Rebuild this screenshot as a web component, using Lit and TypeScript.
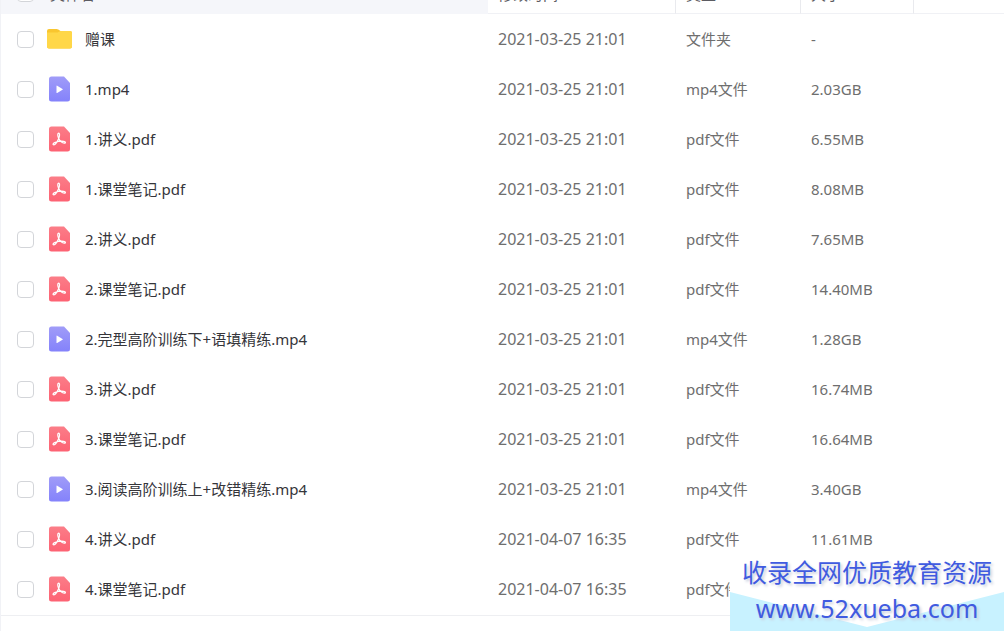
import { LitElement, html, css, svg } from "lit";
import { customElement } from "lit/decorators.js";

type Kind = "folder" | "mp4" | "pdf";
interface Entry { name: string; kind: Kind; date: string; size: string; }

const D1 = "2021-03-25 21:01";
const D2 = "2021-04-07 16:35";
const FILES: Entry[] = [
  { name: "赠课", kind: "folder", date: D1, size: "-" },
  { name: "1.mp4", kind: "mp4", date: D1, size: "2.03GB" },
  { name: "1.讲义.pdf", kind: "pdf", date: D1, size: "6.55MB" },
  { name: "1.课堂笔记.pdf", kind: "pdf", date: D1, size: "8.08MB" },
  { name: "2.讲义.pdf", kind: "pdf", date: D1, size: "7.65MB" },
  { name: "2.课堂笔记.pdf", kind: "pdf", date: D1, size: "14.40MB" },
  { name: "2.完型高阶训练下+语填精练.mp4", kind: "mp4", date: D1, size: "1.28GB" },
  { name: "3.讲义.pdf", kind: "pdf", date: D1, size: "16.74MB" },
  { name: "3.课堂笔记.pdf", kind: "pdf", date: D1, size: "16.64MB" },
  { name: "3.阅读高阶训练上+改错精练.mp4", kind: "mp4", date: D1, size: "3.40GB" },
  { name: "4.讲义.pdf", kind: "pdf", date: D2, size: "11.61MB" },
  { name: "4.课堂笔记.pdf", kind: "pdf", date: D2, size: "" },
];
const TYPES: Record<Kind, string> = { folder: "文件夹", mp4: "mp4文件", pdf: "pdf文件" };

const SHEET = "M5 1.5H18L24 8V24a2.5 2.5 0 0 1-2.5 2.5H5.5A2.5 2.5 0 0 1 3 24V4A2.5 2.5 0 0 1 5.5 1.5Z";

const ICONS = {
  folder: svg`
    <path d="M1 6a2 2 0 0 1 2-2h7.5q1 0 1.8.6L14.5 6H24a2 2 0 0 1 2 2v13.500a2 2 0 0 1-2 2H3a2 2 0 0 1-2-2Z" fill="#f9c62f"/>
    <path d="M1 7.500h9.500q1.200 0 2-.5L14.500 6H24a2 2 0 0 1 2 2v13.500a2 2 0 0 1-2 2H3a2 2 0 0 1-2-2Z" fill="#ffd748"/>`,
  mp4: svg`
    <defs><linearGradient id="violet" x1="0" y1="0" x2="0" y2="1">
      <stop offset="0" stop-color="#a09cf8"/><stop offset="1" stop-color="#8482fb"/></linearGradient></defs>
    <path d=${SHEET} fill="url(#violet)"/>
    <path d="M10.5 11v6.500q0 .8.700.4l5.300-3.200q.600-.4 0-.8l-5.300-3.200q-.7-.4-.7.300Z" fill="#fff"/>`,
  pdf: svg`
    <defs><linearGradient id="coral" x1="0" y1="0" x2="0" y2="1">
      <stop offset="0" stop-color="#fb7d88"/><stop offset="1" stop-color="#fd6273"/></linearGradient></defs>
    <path d=${SHEET} fill="url(#coral)"/>
    <path d="M12.700 13.500C11.600 11.300 11.300 8.300 12.600 8.200C14 8.200 13.700 11.300 12.700 13.500C11.500 16.200 9.400 19.800 7.900 19.900C6.500 19.900 6.900 18.300 8.700 17.600C11.600 16.500 15.200 15.900 17.700 16.300C19.900 16.700 19.900 18.300 18.300 18.200C16.200 18 13.900 15.900 12.700 13.500Z" fill="none" stroke="#fff" stroke-width="1.200" stroke-linejoin="round"/>`,
};

@customElement("app-root")
export class AppRoot extends LitElement {
  static styles = css`
    :host {
      display: block;
      position: relative;
      min-height: 100vh;
      overflow: hidden;
      box-sizing: border-box;
      border-left: 1px solid #f1f2f6;
      background: #fff;
      color: #424e67;
      font-family: "Noto Sans", "Noto Sans CJK SC", sans-serif;
      font-size: 15px;
      line-height: 24px;
    }
    table {
      width: 100%;
      border-collapse: separate;
      border-spacing: 0;
      table-layout: fixed;
      margin-top: -26px;
      padding-bottom: 1px;
      border-bottom: 1px solid #eeeff2;
    }
    .c-name { width: 487px; }
    .c-date { width: 188px; }
    .c-type { width: 125px; }
    .c-size { width: 113px; }
    th, td { padding: 0 10px; text-align: left; font-weight: 400; white-space: nowrap; box-sizing: border-box; }
    th { height: 40px; color: #5c5c62; border-right: 1px solid #e9eaee; border-bottom: 1px solid #f0f1f5; }
    th:first-child { background: #f5f6fa; border-color: #f5f6fa; }
    th:last-child { border-right: 0; }
    td { height: 50px; color: #6e6e6e; }
    th:first-child, td:first-child { padding-left: 16px; }
    .cell { display: flex; align-items: center; }
    .date { font-size: 16px; }
    input {
      appearance: none;
      width: 17px;
      height: 17px;
      margin: 0;
      border: 1px solid #d3d5d9;
      border-radius: 4px;
      background: #fff;
      flex: none;
    }
    svg { width: 27px; height: 28px; margin: 0 12px; flex: none; }
    label { color: #35353a; }
    .head label { color: inherit; margin-left: 16px; }
    .banner {
      position: absolute;
      right: 0;
      bottom: 0;
      width: 274px;
      height: 77px;
      box-sizing: border-box;
      color: #405be0;
      text-align: center;
      text-decoration: none;
      font-size: 25px;
      line-height: 36px;
      text-shadow: 2px 2px 3px #c9cedd;
    }
    .banner svg { position: absolute; inset: 0; width: 100%; height: 100%; margin: 0; }
    .banner span { position: relative; display: block; white-space: nowrap; }
  `;

  render() {
    return html`
      <table>
        <colgroup>
          <col class="c-name"><col class="c-date"><col class="c-type"><col class="c-size"><col>
        </colgroup>
        <thead>
          <tr>
            <th><div class="cell head"><input type="checkbox" id="all"><label for="all">文件名</label></div></th>
            <th>修改时间</th><th>类型</th><th>大小</th><th></th>
          </tr>
        </thead>
        <tbody>
          ${FILES.map((f, i) => html`
            <tr>
              <td><div class="cell">
                <input type="checkbox" id="f${i}">
                <svg viewBox="0 0 27 28" aria-hidden="true">${ICONS[f.kind]}</svg>
                <label for="f${i}">${f.name}</label>
              </div></td>
              <td class="date">${f.date}</td>
              <td>${TYPES[f.kind]}</td>
              <td>${f.size}</td>
              <td></td>
            </tr>`)}
        </tbody>
      </table>
      <a class="banner" href="http://www.52xueba.com">
        <svg viewBox="0 0 274 77" preserveAspectRatio="none" aria-hidden="true">
          <path d="M0 0H274V77H0Z" fill="#fff"/>
          <path d="M0 38L137 73L274 38V77H0Z" fill="#c8f2ff"/>
        </svg>
        <span>收录全网优质教育资源</span>
        <span>www.52xueba.com</span>
      </a>
    `;
  }
}
